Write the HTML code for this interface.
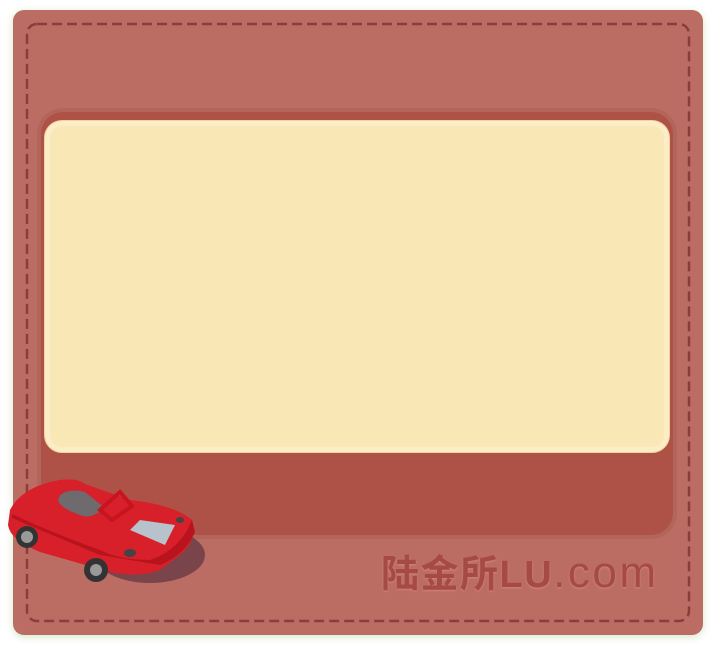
<!DOCTYPE html>
<html><head><meta charset="utf-8"><style>
html,body{margin:0;padding:0;background:#fff;width:716px;height:652px;overflow:hidden}
.card{position:absolute;left:13px;top:10px;width:690px;height:625px;background:#bb6d64;border-radius:11px;box-shadow:0 2px 8px rgba(160,200,130,.45)}
.dark{position:absolute;left:41px;top:112px;width:632px;height:423px;background:#ae5247;border-radius:22px;box-shadow:0 0 0 4px rgba(170,85,75,.35)}
.cream{position:absolute;left:44px;top:120px;width:626px;height:333px;background:#f9e8b6;border:1px solid #f3d39c;border-radius:18px;box-sizing:border-box;box-shadow:inset 0 0 0 5px #faedc8}
.logo{position:absolute;left:381px;top:549px;font:bold 38px "Liberation Sans","Noto Sans CJK SC",sans-serif;color:#a54b43;letter-spacing:1.5px;white-space:nowrap;text-shadow:0 1px 2px rgba(230,150,140,.6);line-height:48px}
.logo span{font-weight:normal;font-size:44px;letter-spacing:2.5px}
</style></head><body>
<div class="card"></div>
<svg style="position:absolute;left:0;top:0" width="716" height="652"><rect x="27" y="24" width="662" height="597" rx="10" fill="none" stroke="#8b3d3e" stroke-width="2.5" stroke-dasharray="10 5"/></svg>
<div class="dark"></div>
<div class="cream"></div>
<div class="logo">陆金所LU<span>.com</span></div>
<svg style="position:absolute;left:0;top:470px" width="215" height="130" viewBox="0 0 215 130">
<ellipse cx="150" cy="85" rx="55" ry="28" fill="#6a3a45" opacity=".8"/>
<path d="M10 40 Q20 20 50 12 Q75 6 85 14 L130 30 Q175 35 192 50 Q198 70 180 85 L160 100 Q140 108 110 102 L40 82 Q10 70 8 55 Z" fill="#d7202a"/>
<path d="M12 48 Q40 60 100 85 L160 95 Q185 85 195 62 L192 50 Q180 80 150 90 Q120 90 100 80 Q50 62 12 44 Z" fill="#b9131d"/>
<path d="M60 25 Q70 18 85 22 L105 38 Q90 50 80 45 Q60 38 58 30 Z" fill="#6e6a6e"/>
<path d="M100 40 L120 22 L132 36 L112 50 Z" fill="none" stroke="#c8141e" stroke-width="4"/>
<path d="M140 50 L175 55 L165 75 L130 60 Z" fill="#b8c2cc"/>
<circle cx="27" cy="67" r="11" fill="#333"/><circle cx="27" cy="67" r="6" fill="#999"/>
<circle cx="96" cy="100" r="12" fill="#333"/><circle cx="96" cy="100" r="6" fill="#999"/>
<ellipse cx="130" cy="83" rx="6" ry="4" fill="#444"/>
<ellipse cx="180" cy="50" rx="4" ry="3" fill="#444"/>
</svg>
</body></html>
